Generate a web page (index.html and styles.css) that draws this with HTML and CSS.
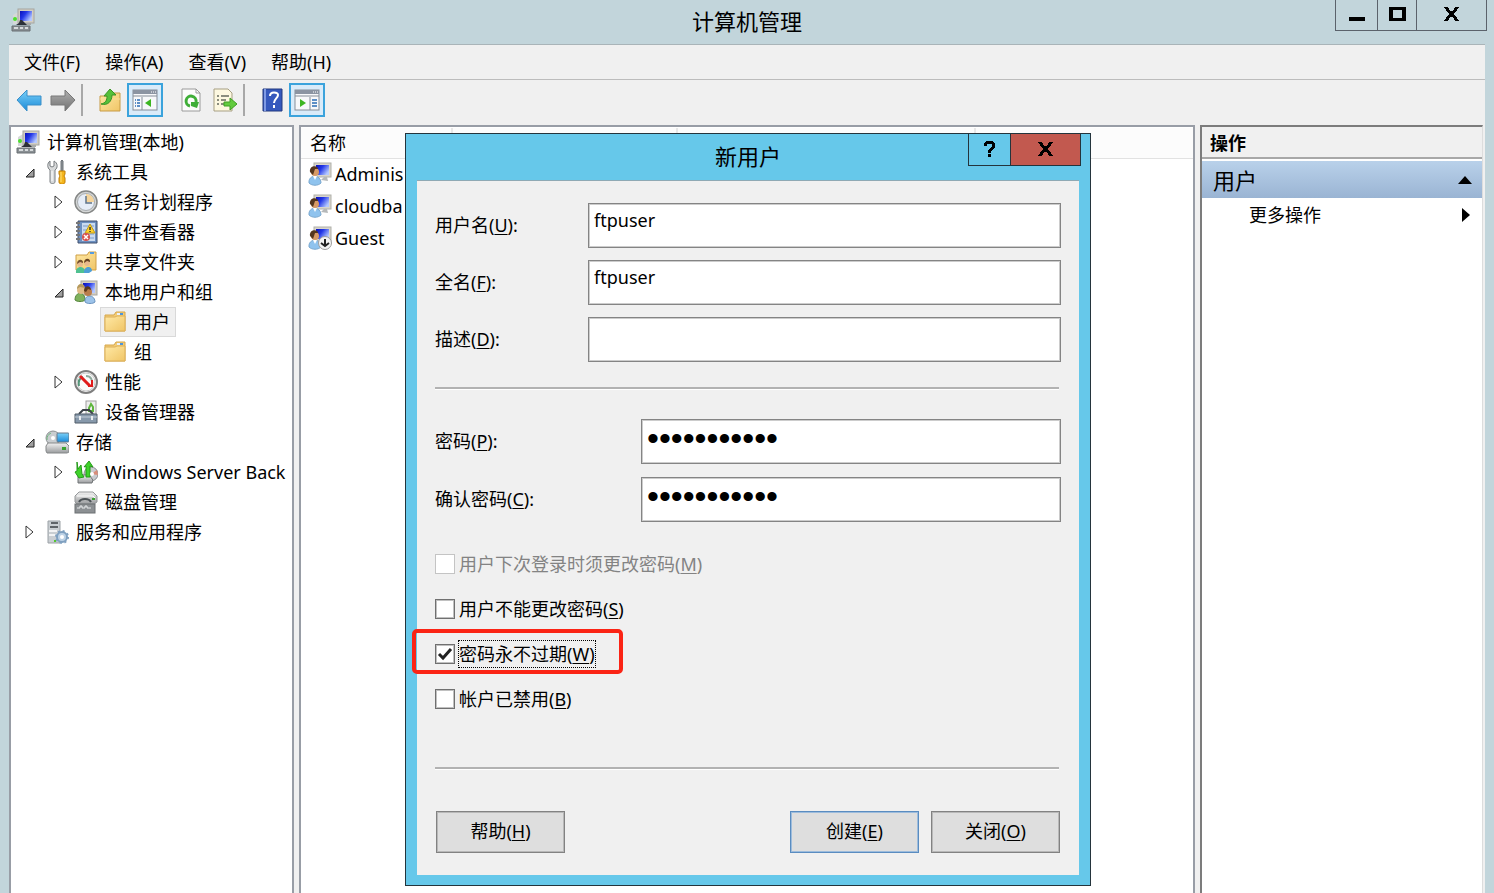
FILE: index.html
```html
<!DOCTYPE html>
<html lang="zh-CN">
<head>
<meta charset="utf-8">
<title>计算机管理</title>
<link rel="stylesheet" href="styles.css">
</head>
<body>

<!-- Icon sheet -->
<svg class="sheet" width="0" height="0" aria-hidden="true">
    <defs>
        <linearGradient id="screen" x1="0" y1="0" x2="1" y2="0.6">
            <stop offset="0" stop-color="#0a10b8"/>
            <stop offset="0.45" stop-color="#2438e8"/>
            <stop offset="1" stop-color="#b4c8ff"/>
        </linearGradient>
        <linearGradient id="folder" x1="0" y1="0" x2="1" y2="1">
            <stop offset="0" stop-color="#ffe9a6"/>
            <stop offset="1" stop-color="#f0c566"/>
        </linearGradient>
        <linearGradient id="blue" x1="0" y1="0" x2="0" y2="1">
            <stop offset="0" stop-color="#7ad0f8"/>
            <stop offset="1" stop-color="#1a8ad8"/>
        </linearGradient>
        <linearGradient id="gray" x1="0" y1="0" x2="0" y2="1">
            <stop offset="0" stop-color="#b0b0b0"/>
            <stop offset="1" stop-color="#707070"/>
        </linearGradient>
        <linearGradient id="metal" x1="0" y1="0" x2="0" y2="1">
            <stop offset="0" stop-color="#f2f2f2"/>
            <stop offset="1" stop-color="#9a9c9e"/>
        </linearGradient>
    </defs>
    <symbol id="i-computer" viewBox="0 0 24 24">
        <path d="M2 7l5-3v12H2z" fill="#d6d8d8"/>
        <rect x="7" y="1" width="16" height="14" fill="#d2cec4" stroke="#a6a6a0"/>
        <rect x="9" y="3" width="12" height="10" fill="url(#screen)"/>
        <path d="M14 15h6v2h-6z" fill="#a8aaa8"/>
        <circle cx="4" cy="11" r="2" fill="#4be02e"/>
        <path d="M5 17l3-2 1-3h2l3 3 2 2z" fill="#2c3038"/>
        <path d="M1 18h18v5H1z" fill="#8a9094" stroke="#686e72"/>
        <path d="M3 19h4v2H3zM9 19h3v2H9zM14 19h3v2h-3z" fill="#d6dadc"/>
    </symbol>
    <symbol id="i-tools" viewBox="0 0 24 24">
        <path d="M5 1v5l2 1 2-1V1c4 2 4 7 1 9v12c0 2-5 2-5 0V10C2 8 2 3 5 1z" fill="#d8dadb" stroke="#7a7f82"/>
        <path d="M7 11v10" stroke="#fff"/>
        <path d="M16 1l1-1 1 1v10h-2z" fill="#8d9398" stroke="#6e7478"/>
        <path d="M14 11h6v3l-1 2 1 2v4c0 3-6 3-6 0v-4l1-2-1-2z" fill="#f4b51c" stroke="#c27e05"/>
        <path d="M16 12v10" stroke="#ffe27a"/>
    </symbol>
    <symbol id="i-clock" viewBox="0 0 24 24">
        <circle cx="12" cy="12" r="11" fill="#d4d6d6" stroke="#858786" stroke-width="1.5"/>
        <circle cx="12" cy="12" r="8.500" fill="#e6edf7" stroke="#a9adb0"/>
        <path d="M12 12V4a8 8 0 0 1 8 8z" fill="#f5d49a"/>
        <path d="M12 6v7h6" fill="none" stroke="#5f7388" stroke-width="1.5"/>
    </symbol>
    <symbol id="i-event" viewBox="0 0 24 24">
        <path d="M4 1h19v22H4z" fill="#6c8fc0" stroke="#3e4f6c"/>
        <path d="M8 3h13v18H8z" fill="#c9daf0"/>
        <path d="M9 6h11M9 10h11M9 14h11M9 18h11" stroke="#7c9bc8"/>
        <path d="M2 3h4M2 7h4M2 11h4M2 15h4M2 19h4" stroke="#777" stroke-width="2"/>
        <path d="M16 4l5 9H11z" fill="#ffd22e" stroke="#c29b13"/>
        <path d="M16 7v3M16 11v1" stroke="#333" stroke-width="1.5"/>
        <circle cx="12" cy="17" r="4" fill="#d8504c"/>
        <path d="M10 15l4 4M14 15l-4 4" stroke="#fff" stroke-width="1.500"/>
    </symbol>
    <symbol id="i-shared" viewBox="0 0 24 24">
        <path d="M2 5h11l2-3h7v18H2z" fill="url(#folder)" stroke="#cf9f45"/>
        <path d="M16 3h4" stroke="#559be0" stroke-width="2"/>
        <path d="M2 23c-1-7 8-8 9-2v2z" fill="#4fc191"/>
        <path d="M10 22c0-6 8-7 8-1l-3 2h-5z" fill="#4d9fd6"/>
        <circle cx="6" cy="14" r="3" fill="#e8b98c"/>
        <path d="M3 14c0-6 7-5 6-1l-3-1z" fill="#74502d"/>
        <circle cx="13" cy="13" r="3" fill="#e8b98c"/>
        <path d="M10 13c0-6 7-5 6-1l-3-1z" fill="#694422"/>
    </symbol>
    <symbol id="i-group" viewBox="0 0 24 24">
        <rect x="7" y="1" width="16" height="14" fill="#d2cec4" stroke="#a6a6a0"/>
        <rect x="9" y="3" width="12" height="10" fill="url(#screen)"/>
        <path d="M1 20c0-9 10-9 10 0-2 2-8 2-10 0z" fill="#7fb25d" stroke="#55853d"/>
        <path d="M11 22c-1-8 10-8 10 0-2 2-8 2-10 0z" fill="#9cc3ea" stroke="#6c94be"/>
        <circle cx="7" cy="10" r="4" fill="#dfbb86"/>
        <path d="M3 9c0-7 8-6 8-1L6 7z" fill="#b5995c"/>
        <circle cx="14" cy="12" r="4" fill="#b97d4c"/>
        <path d="M10 11c0-6 7-6 7-1l-3-1-2 3z" fill="#5b3a1d"/>
    </symbol>
    <symbol id="i-folder" viewBox="0 0 24 24">
        <path d="M2 5h9l2-3h9v19H2z" fill="#f3cc76" stroke="#d5a64b"/>
        <path d="M14 3h6v2h-6z" fill="#e9f2fb"/>
        <path d="M17 4h3" stroke="#4c94dc" stroke-width="2"/>
        <path d="M2 7h10l2-1h8v15H2z" fill="url(#folder)" stroke="#dcb05a"/>
    </symbol>
    <symbol id="i-gauge" viewBox="0 0 24 24">
        <circle cx="12" cy="12" r="11" fill="#fafafa" stroke="#7e7e7e" stroke-width="2"/>
        <circle cx="12" cy="12" r="9" fill="none" stroke="#c9c9c9"/>
        <path d="M5 16c-1-5 1-8 4-9" fill="none" stroke="#55967a" stroke-width="2"/>
        <path d="M12 6c5 0 7 4 6 10" fill="none" stroke="#8fa89c" stroke-width="2"/>
        <path d="M6 6l10 10" stroke="#e01b1b" stroke-width="3"/>
        <path d="M18 10v6h-4" fill="none" stroke="#e01b1b" stroke-width="2"/>
    </symbol>
    <symbol id="i-device" viewBox="0 0 24 24">
        <rect x="12" y="1" width="10" height="16" fill="#eee" stroke="#a0a0a0"/>
        <path d="M15 8l2-4 2 3v4h-4z" fill="none" stroke="#5fb63e" stroke-width="2"/>
        <path d="M5 14l4-4h6l4 4" fill="none" stroke="#3d444a" stroke-width="2"/>
        <path d="M1 14h22v9H1z" fill="#8799ab" stroke="#505d68"/>
        <path d="M1 17h22" stroke="#c3ced8"/>
        <path d="M6 16v4M18 16v4" stroke="#e9edf0" stroke-width="2"/>
    </symbol>
    <symbol id="i-storage" viewBox="0 0 24 24">
        <circle cx="8" cy="8" r="7" fill="#c9cdd0" stroke="#8c9092"/>
        <circle cx="8" cy="8" r="2" fill="#fff"/>
        <path d="M2 10a7 7 0 0 1 4-7" fill="none" stroke="#71b880"/>
        <rect x="12" y="3" width="12" height="9" rx="1" fill="url(#blue)" stroke="#66798a"/>
        <path d="M3 13h18l3 3v6l-2 1H2l-1-2v-5z" fill="url(#metal)" stroke="#858889"/>
        <rect x="17" y="17" width="4" height="3" fill="#3ba232"/>
    </symbol>
    <symbol id="i-backup" viewBox="0 0 24 24">
        <circle cx="17" cy="14" r="7" fill="#c9cbd0" stroke="#8c8e92"/>
        <path d="M17 14l6-4 1 5z" fill="#d98d7a"/>
        <path d="M4 15h11l4 5-1 3H4z" fill="url(#metal)" stroke="#6f7374"/>
        <path d="M3 2l1 7 3-4 1 9 2 3-5 1-4-6 2-1z" fill="#3fd32a" stroke="#259a19"/>
        <path d="M10 7l5-6 4 6-3-1v11h-4V6z" fill="#3fd32a" stroke="#259a19"/>
        <circle cx="18" cy="14" r="2" fill="#fff"/>
    </symbol>
    <symbol id="i-disk" viewBox="0 0 24 24">
        <path d="M5 2h14l4 4v6l-3 2H3l-2-2V6z" fill="url(#metal)" stroke="#95989a"/>
        <path d="M3 6h16l2 2" fill="none" stroke="#fff"/>
        <path d="M5 12c2-4 10-4 12 0" fill="none" stroke="#4c5256" stroke-width="2"/>
        <rect x="18" y="8" width="3" height="2" fill="#3ba232"/>
        <rect x="1" y="14" width="20" height="9" fill="#8c9093" stroke="#6c7073"/>
        <path d="M3 18h3v-2h2v2h3v-2h2v2h4" fill="none" stroke="#e8eaeb"/>
    </symbol>
    <symbol id="i-services" viewBox="0 0 24 24">
        <path d="M3 1h12v22H3z" fill="#c9ced2" stroke="#9ba1a6"/>
        <path d="M6 3h7M5 7h8" stroke="#3c4246" stroke-width="1.500"/>
        <path d="M4 11h8M4 15h7" stroke="#fff" stroke-width="1.5"/>
        <circle cx="17" cy="17" r="5" fill="#bdd2e6" stroke="#7fa0c0" stroke-width="2"/>
        <circle cx="17" cy="17" r="6" fill="none" stroke="#7fa0c0" stroke-width="2" stroke-dasharray="2 2.700"/>
        <circle cx="17" cy="17" r="2" fill="#fff"/>
        <rect x="9" y="20" width="2" height="2" fill="#55c62f"/>
    </symbol>
    <symbol id="i-user" viewBox="0 0 24 24">
        <rect x="6" y="1" width="17" height="14" fill="#d8d5cc" stroke="#b0b0aa"/>
        <rect x="8" y="3" width="13" height="10" fill="url(#screen)"/>
        <path d="M13 18l3-3h3l1 4z" fill="#b5b8b9"/>
        <path d="M1 21c-1-9 12-9 12 0-3 3-9 3-12 0z" fill="#8fc3ee" stroke="#7ba9d0"/>
        <path d="M5 14l2 4 2-4z" fill="#fff"/>
        <circle cx="7" cy="10" r="4" fill="#d79a66"/>
        <path d="M2 10c-1-7 8-7 8-3H7l-2 6z" fill="#54361e"/>
    </symbol>
    <symbol id="i-user-off" viewBox="0 0 24 24">
        <use href="#i-user"/>
        <circle cx="17" cy="17" r="6.500" fill="#f4f4f4" stroke="#9d9d9d"/>
        <path d="M17 13v7M13 17l4 3 4-3" fill="none" stroke="#222" stroke-width="2"/>
    </symbol>
    <symbol id="i-left" viewBox="0 0 26 24">
        <path d="M1 12L11 2v6h14v9H11v6z" fill="url(#blue)" stroke="#3a8fc8"/>
    </symbol>
    <symbol id="i-right" viewBox="0 0 26 24">
        <path d="M25 12L15 2v6H1v9h14v6z" fill="url(#gray)" stroke="#787878"/>
    </symbol>
    <symbol id="i-up" viewBox="0 0 24 24">
        <path d="M2 8h10l2-3h8v18H2z" fill="url(#folder)" stroke="#c79a45"/>
        <path d="M2 11h20" stroke="#f7dc98"/>
        <path d="M3 16c5-1 6-4 6-8H6l6-7 6 6h-4c0 6-4 11-11 9z" fill="#55c03a" stroke="#3a9526"/>
    </symbol>
    <symbol id="i-tree" viewBox="0 0 26 22">
        <rect x="1" y="1" width="24" height="20" fill="#f7f8fa" stroke="#858d98"/>
        <path d="M1 3h24" stroke="#8b94a2" stroke-width="4"/>
        <path d="M19 3h5" stroke="#fff" stroke-dasharray="1 1"/>
        <path d="M1 7h24M10 8v13" stroke="#858d98"/>
        <path d="M3 11h5M3 14h5M3 17h5" stroke="#5d8fc6" stroke-width="2" stroke-dasharray="1 1 3"/>
        <path d="M19 10v8l-6-4z" fill="#3cb521"/>
    </symbol>
    <symbol id="i-panel" viewBox="0 0 26 22">
        <rect x="1" y="1" width="24" height="20" fill="#f7f8fa" stroke="#858d98"/>
        <path d="M1 3h24" stroke="#8b94a2" stroke-width="4"/>
        <path d="M19 3h5" stroke="#fff" stroke-dasharray="1 1"/>
        <path d="M1 7h24M16 8v13" stroke="#858d98"/>
        <path d="M18 11h5M18 14h5M18 17h5" stroke="#5d8fc6" stroke-width="2"/>
        <path d="M6 10v8l6-4z" fill="#3cb521"/>
    </symbol>
    <symbol id="i-refresh" viewBox="0 0 24 24">
        <path d="M3 1h14l4 4v18H3z" fill="#fcfcfc" stroke="#9a9a9a"/>
        <path d="M17 1v4h4" fill="none" stroke="#9a9a9a"/>
        <path d="M11 18a5 5 0 1 1 6-4" fill="none" stroke="#3fae38" stroke-width="3"/>
        <path d="M12 14h8l-2 6-6-2z" fill="#3fae38"/>
    </symbol>
    <symbol id="i-export" viewBox="0 0 26 24">
        <path d="M2 1h14l4 4v18H2z" fill="#fdf8e0" stroke="#a79f83"/>
        <path d="M5 8h2M5 12h2M5 16h2M9 8h8M9 12h5M9 16h5" stroke="#66695e" stroke-width="1.500"/>
        <path d="M12 14h6v-4l7 6-7 6v-4h-6z" fill="#62cb3e" stroke="#3f9f25"/>
    </symbol>
    <symbol id="i-help" viewBox="0 0 24 24">
        <path d="M3 1h19v22H3z" fill="#3558bd" stroke="#22387e"/>
        <path d="M5 1v22" stroke="#7f9ae4" stroke-width="2"/>
        <path d="M10 8c0-5 8-4 8-1 0 3-4 4-4 8" fill="none" stroke="#fff" stroke-width="2"/>
        <rect x="13" y="17" width="2" height="3" fill="#fff"/>
    </symbol>
    <symbol id="i-close" viewBox="0 0 15 14">
        <path d="M0 0h4v1h1v2h1v1h3V3h1V1h1V0h4v1h-1v1h-1v2h-1v1h-1v1h-1v2h1v1h1v1h1v2h1v1h1v1h-4v-1h-1v-2H9v-1H6v1H5v2H4v1H0v-1h1v-1h1v-2h1V9h1V8h1V6H4V5H3V4H2V2H1V1H0z"/>
    </symbol>
    <symbol id="i-open" viewBox="0 0 10 10">
        <path d="M9 1v8H1z" fill="#a0a0a0" stroke="#222"/>
    </symbol>
    <symbol id="i-shut" viewBox="0 0 10 14">
        <path d="M1 1l7 6-7 6z" fill="#fff" stroke="#333"/>
    </symbol>
</svg>

<div class="window">
    <header class="titlebar">
        <svg class="icon app-icon"><use href="#i-computer"/></svg>
        <h1 class="title">计算机管理</h1>
        <div class="window-buttons">
            <button class="minimize" aria-label="最小化"><svg width="16" height="14"><path d="M0 10h16v4H0z"/></svg></button>
            <button class="maximize" aria-label="最大化"><svg width="17" height="14"><path d="M0 0h17v14H0zM4 3v8h9V3z" fill-rule="evenodd"/></svg></button>
            <button class="close" aria-label="关闭"><svg width="15" height="14"><use href="#i-close"/></svg></button>
        </div>
    </header>

    <main class="client">
        <nav class="menubar">
            <button>文件(F)</button>
            <button>操作(A)</button>
            <button>查看(V)</button>
            <button>帮助(H)</button>
        </nav>

        <div class="toolbar">
            <button aria-label="后退"><svg width="26" height="24"><use href="#i-left"/></svg></button>
            <button aria-label="前进"><svg width="26" height="24"><use href="#i-right"/></svg></button>
            <span class="divider"></span>
            <button aria-label="向上"><svg class="icon"><use href="#i-up"/></svg></button>
            <button class="pressed" aria-label="显示控制台树"><svg width="26" height="22"><use href="#i-tree"/></svg></button>
            <span class="spacer"></span>
            <button aria-label="刷新"><svg class="icon"><use href="#i-refresh"/></svg></button>
            <button aria-label="导出列表"><svg width="26" height="24"><use href="#i-export"/></svg></button>
            <span class="divider"></span>
            <button aria-label="帮助"><svg class="icon"><use href="#i-help"/></svg></button>
            <button class="pressed" aria-label="显示操作窗格"><svg width="26" height="22"><use href="#i-panel"/></svg></button>
        </div>

        <div class="panes">
            <section class="pane tree">
                <div class="row"><span class="node"><svg class="icon"><use href="#i-computer"/></svg>计算机管理(本地)</span></div>
                <ul>
                    <li>
                        <div class="row"><svg class="arrow"><use href="#i-open" width="10" height="10" y="3"/></svg><span class="node"><svg class="icon"><use href="#i-tools"/></svg>系统工具</span></div>
                        <ul>
                            <li class="row"><svg class="arrow"><use href="#i-shut" width="10" height="14"/></svg><span class="node"><svg class="icon"><use href="#i-clock"/></svg>任务计划程序</span></li>
                            <li class="row"><svg class="arrow"><use href="#i-shut" width="10" height="14"/></svg><span class="node"><svg class="icon"><use href="#i-event"/></svg>事件查看器</span></li>
                            <li class="row"><svg class="arrow"><use href="#i-shut" width="10" height="14"/></svg><span class="node"><svg class="icon"><use href="#i-shared"/></svg>共享文件夹</span></li>
                            <li>
                                <div class="row"><svg class="arrow"><use href="#i-open" width="10" height="10" y="3"/></svg><span class="node"><svg class="icon"><use href="#i-group"/></svg>本地用户和组</span></div>
                                <ul>
                                    <li class="row"><span class="arrow"></span><span class="node selected"><svg class="icon"><use href="#i-folder"/></svg>用户</span></li>
                                    <li class="row"><span class="arrow"></span><span class="node"><svg class="icon"><use href="#i-folder"/></svg>组</span></li>
                                </ul>
                            </li>
                            <li class="row"><svg class="arrow"><use href="#i-shut" width="10" height="14"/></svg><span class="node"><svg class="icon"><use href="#i-gauge"/></svg>性能</span></li>
                            <li class="row"><span class="arrow"></span><span class="node"><svg class="icon"><use href="#i-device"/></svg>设备管理器</span></li>
                        </ul>
                    </li>
                    <li>
                        <div class="row"><svg class="arrow"><use href="#i-open" width="10" height="10" y="3"/></svg><span class="node"><svg class="icon"><use href="#i-storage"/></svg>存储</span></div>
                        <ul>
                            <li class="row"><svg class="arrow"><use href="#i-shut" width="10" height="14"/></svg><span class="node"><svg class="icon"><use href="#i-backup"/></svg>Windows Server Back</span></li>
                            <li class="row"><span class="arrow"></span><span class="node"><svg class="icon"><use href="#i-disk"/></svg>磁盘管理</span></li>
                        </ul>
                    </li>
                    <li class="row"><svg class="arrow"><use href="#i-shut" width="10" height="14"/></svg><span class="node"><svg class="icon"><use href="#i-services"/></svg>服务和应用程序</span></li>
                </ul>
            </section>

            <section class="pane list">
                <table>
                    <thead>
                        <tr><th class="col-name">名称</th><th class="col-full"></th><th class="col-desc"></th><th></th></tr>
                    </thead>
                    <tbody>
                        <tr><td><span class="user"><svg class="icon"><use href="#i-user"/></svg><span class="user-name">Adminis</span></span></td><td></td><td></td><td></td></tr>
                        <tr><td><span class="user"><svg class="icon"><use href="#i-user"/></svg><span class="user-name">cloudba</span></span></td><td></td><td></td><td></td></tr>
                        <tr><td><span class="user"><svg class="icon"><use href="#i-user-off"/></svg><span class="user-name">Guest</span></span></td><td></td><td></td><td></td></tr>
                    </tbody>
                </table>
            </section>

            <aside class="actions">
                <h2>操作</h2>
                <button class="group">用户<svg width="14" height="8"><path d="M7 0l7 8H0z"/></svg></button>
                <button class="more">更多操作<svg width="14" height="14"><path d="M4 0l8 7-8 7z"/></svg></button>
            </aside>
        </div>
    </main>
</div>

<div class="dialog" role="dialog" aria-labelledby="dialog-title">
    <header class="caption">
        <h2 id="dialog-title">新用户</h2>
        <div class="window-buttons">
            <button class="what" aria-label="帮助"><svg width="11" height="16"><path d="M0 2h1V1h1V0h7v1h1v1h1v5h-1v1H9v1H8v1H7v2H4V9h1V8h1V7h1V6h1V3H3v2H0zM4 13h3v3H4z"/></svg></button>
            <button class="close red" aria-label="关闭"><svg width="15" height="14"><use href="#i-close"/></svg></button>
        </div>
    </header>

    <form class="form">
        <div class="fields">
            <label for="username">用户名(<u>U</u>):</label>
            <input type="text" id="username" value="ftpuser">
            <label for="fullname">全名(<u>F</u>):</label>
            <input type="text" id="fullname" value="ftpuser">
            <label for="description">描述(<u>D</u>):</label>
            <input type="text" id="description">
        </div>
        <hr>
        <div class="fields passwords">
            <label for="password">密码(<u>P</u>):</label>
            <input type="password" id="password" value="abcdefghijk">
            <label for="confirm">确认密码(<u>C</u>):</label>
            <input type="password" id="confirm" value="abcdefghijk">
        </div>
        <div class="checks">
            <div class="check disabled"><input type="checkbox" id="must-change" disabled><label for="must-change">用户下次登录时须更改密码(<u>M</u>)</label></div>
            <div class="check"><input type="checkbox" id="no-change"><label for="no-change">用户不能更改密码(<u>S</u>)</label></div>
            <div class="check marked"><input type="checkbox" id="never-expires" checked><label for="never-expires">密码永不过期(<u>W</u>)</label></div>
            <div class="check"><input type="checkbox" id="account-off"><label for="account-off">帐户已禁用(<u>B</u>)</label></div>
        </div>
        <hr>
        <div class="buttons">
            <button type="button" class="help">帮助(<u>H</u>)</button>
            <button type="button" class="default">创建(<u>E</u>)</button>
            <button type="button">关闭(<u>O</u>)</button>
        </div>
    </form>
</div>

</body>
</html>
```
FILE: styles.css
```css
*, *::after {
    box-sizing: border-box;
}

body {
    margin: 0;
    font-family: "Noto Sans", "Noto Sans CJK SC", sans-serif;
    font-size: 18px;
    line-height: 28px;
    color: #000;
    overflow: hidden;
}

button, input {
    font: inherit;
    color: inherit;
}

button {
    padding: 0;
    border: none;
    background: none;
}

h1, h2, ul {
    margin: 0;
    padding: 0;
    font-weight: normal;
    list-style: none;
}

u {
    text-underline-offset: 2px;
}

svg {
    flex: none;
}

.sheet {
    position: absolute;
}

.icon {
    width: 24px;
    height: 24px;
}

/* Main window */
.window {
    height: 100vh;
    display: flex;
    flex-direction: column;
    padding: 0 9px;
    background-color: #c2d5db;
}

.titlebar {
    position: relative;
    display: flex;
    height: 44px;
    padding-top: 8px;
}

.app-icon {
    margin-left: 2px;
}

.title {
    flex: 1;
    margin-right: 26px;
    font-size: 22px;
    line-height: 26px;
    text-align: center;
}

.window-buttons {
    position: absolute;
    top: 0;
    right: -2px;
    display: flex;
    height: 31px;
    border: 1px solid #5b626b;
    border-top: none;
}

.window-buttons button {
    display: flex;
    align-items: center;
    justify-content: center;
    padding-bottom: 2px;
}

.window-buttons button + button {
    border-left: 1px solid #5b626b;
}

.minimize {
    width: 41px;
}

.maximize {
    width: 39px;
}

.close {
    width: 70px;
}

.client {
    flex: 1;
    display: flex;
    flex-direction: column;
    min-height: 0;
    border-top: 1px solid #a9b4b8;
    background-color: #f0f0f0;
}

.menubar {
    display: flex;
    gap: 25px;
    height: 35px;
    padding-left: 15px;
    border-bottom: 1px solid #bcbcbc;
}

.toolbar {
    display: flex;
    align-items: center;
    height: 45px;
    padding: 0 3px 6px;
}

.toolbar button {
    display: flex;
    align-items: center;
    justify-content: center;
    width: 34px;
    height: 34px;
}

.toolbar .pressed {
    width: 36px;
    border: 2px solid #3ba3dc;
    background-color: #d9ebf9;
}

.divider {
    width: 2px;
    height: 32px;
    margin: 0 10px 0 1px;
    background-color: #a8a8a8;
}

.spacer {
    width: 11px;
}

.panes {
    flex: 1;
    display: flex;
    gap: 5px;
    min-height: 0;
}

.pane {
    border: 2px solid #989da6;
    border-bottom: none;
    background-color: #fff;
    overflow: hidden;
}

/* Console tree */
.tree {
    flex: none;
    width: 285px;
    padding-left: 2px;
}

.tree ul ul {
    padding-left: 29px;
}

.row {
    display: flex;
    align-items: center;
    height: 30px;
    white-space: nowrap;
}

.arrow {
    flex: none;
    width: 29px;
    height: 14px;
    padding-left: 12px;
}

.node {
    display: flex;
    align-items: center;
    gap: 7px;
    height: 30px;
    padding: 0 6px 0 3px;
}

.selected {
    background-color: #f0f0f0;
    box-shadow: inset 0 0 0 1px #d9d9d9;
}

/* User list */
.list {
    flex: 1;
    padding-top: 1px;
}

.list table {
    width: 100%;
    table-layout: fixed;
    border-collapse: collapse;
}

.list th {
    height: 30px;
    padding: 0 9px;
    border-right: 2px solid #e8e8e8;
    border-bottom: 1px solid #e2e2e2;
    background-color: #fcfcfc;
    font-weight: normal;
    text-align: left;
}

.list th:last-child {
    border-right: none;
}

.col-name {
    width: 151px;
}

.col-full {
    width: 225px;
}

.col-desc {
    width: 298px;
}

.list td {
    height: 32px;
    padding: 0 7px;
}

.user {
    display: flex;
    align-items: center;
    gap: 3px;
}

/* Actions pane */
.actions {
    flex: none;
    width: 283px;
    margin-right: 2px;
    border: 2px solid #7c7c7c;
    border-right: 1px solid #ddd;
    border-bottom: none;
    background-color: #fff;
}

.actions h2 {
    height: 32px;
    padding: 2px 8px;
    border-bottom: 2px solid #a8a8a8;
    background-color: #f0f0f0;
    font-size: 18px;
    font-weight: bold;
}

.actions button {
    display: flex;
    align-items: center;
    justify-content: space-between;
    width: 100%;
    padding-right: 10px;
}

.actions .group {
    height: 37px;
    margin-top: 2px;
    padding-left: 11px;
    background: linear-gradient(#b9d1ea, #9ab4d3);
    font-size: 22px;
}

.actions .more {
    height: 34px;
    padding-left: 47px;
}

/* New user dialog */
.dialog {
    position: absolute;
    top: 133px;
    left: 405px;
    width: 686px;
    padding: 0 11px 10px;
    border: 1px solid #24343c;
    background-color: #66c8ea;
}

.caption {
    position: relative;
    height: 46px;
    padding-top: 9px;
}

.caption h2 {
    font-size: 22px;
    line-height: 26px;
    text-align: center;
}

.caption .window-buttons {
    height: 32px;
    border-color: #24343c;
}

.caption button + button {
    border-color: #24343c;
}

.what {
    width: 41px;
}

.red {
    background-color: #c2594f;
}

.form {
    padding: 22px 18px;
    border-top: 1px solid #8fa9b4;
    background-color: #f0f0f0;
}

.fields {
    display: grid;
    grid-template-columns: 153px 1fr;
    row-gap: 12px;
    align-items: center;
}

.fields label {
    padding-bottom: 2px;
}

.passwords {
    grid-template-columns: 206px 1fr;
    row-gap: 13px;
}

.fields input {
    width: 100%;
    height: 45px;
    padding: 0 5px 12px;
    border: 1px solid #848484;
    border-radius: 0;
    background-color: #fff;
    box-shadow: inset 0 0 0 1px #ccc;
    outline: none;
}

.fields input[type="password"] {
    padding-bottom: 6px;
    font-family: "Liberation Sans", sans-serif;
    font-size: 34px;
}

hr {
    height: 3px;
    margin: 25px 2px 29px 0;
    border: none;
    border-top: 2px solid #b2b2b2;
    border-bottom: 1px solid #fff;
}

.checks {
    margin: 19px 0 46px;
}

.check {
    position: relative;
    display: flex;
    align-items: center;
    gap: 3px;
    height: 45px;
}

.check input {
    appearance: none;
    width: 20px;
    height: 20px;
    margin: 0;
    border: 1px solid #707070;
    background-color: #fff;
    box-shadow: inset 0 0 0 1px #c0c0c0;
}

.check input:checked {
    background-image: url("data:image/svg+xml,%3Csvg xmlns='http://www.w3.org/2000/svg' viewBox='0 0 18 18'%3E%3Cpath d='M3 9l4 4 8-9' fill='none' stroke='%23222' stroke-width='3'/%3E%3C/svg%3E");
}

.check label {
    line-height: 26px;
    border: 1px dotted transparent;
}

.disabled {
    color: #838383;
}

.check input:disabled {
    border-color: #c4c4c4;
    box-shadow: none;
}

.marked label {
    border-color: #000;
}

/* Red frame round the option to tick */
.marked::after {
    content: "";
    position: absolute;
    top: -2px;
    left: -23px;
    width: 211px;
    height: 45px;
    border: 4px solid #fb2415;
    border-radius: 5px;
}

.buttons {
    display: flex;
    gap: 12px;
    margin-top: 41px;
    padding: 0 1px;
}

.buttons button {
    width: 129px;
    height: 42px;
    padding-bottom: 2px;
    border: 1px solid #828282;
    background-color: #dedede;
    box-shadow: inset 0 0 0 1px #b8b8b8;
}

.buttons .help {
    margin-right: auto;
}

.buttons .default {
    border-color: #5a8cc0;
    box-shadow: inset 0 0 0 1px #9dbcdc;
}
```
